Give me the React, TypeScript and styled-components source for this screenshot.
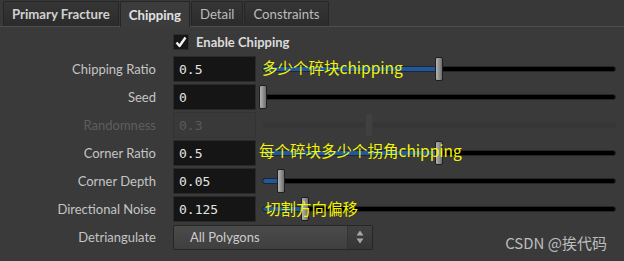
import { Fragment } from 'react';
import styled, { createGlobalStyle } from 'styled-components';

const GlobalStyle = createGlobalStyle`
  html, body {
    margin: 0;
    padding: 0;
    background: #3a3a3a;
  }
  body {
    font-family: Lato, "Noto Sans", sans-serif;
  }
`;

const Panel = styled.div`
  position: relative;
  width: 624px;
  height: 261px;
  background: #3a3a3a;
  overflow: hidden;
`;

const TabBar = styled.div`
  display: flex;
  align-items: flex-end;
  height: 26px;
  padding-left: 3px;
  border-bottom: 1px solid #4e4e4e;
  background: #383838;
`;

const Tab = styled.div<{ $active?: boolean; $bold?: boolean }>`
  margin-right: 1px;
  padding: 0 8px;
  display: flex;
  align-items: center;
  box-sizing: border-box;
  font-size: 13.2px;
  font-weight: ${(p) => (p.$bold ? 700 : 400)};
  color: ${(p) => (p.$active ? '#e2e2e2' : p.$bold ? '#d0d0d0' : '#bdbdbd')};
  background: ${(p) =>
    p.$active ? '#3c3c3c' : 'linear-gradient(#363636, #2b2b2b)'};
  border: 1px solid #262626;
  border-bottom: none;
  border-radius: 2px 2px 0 0;
  margin-bottom: ${(p) => (p.$active ? '-1px' : '0')};
  height: ${(p) => (p.$active ? '26px' : '25px')};
`;

const Form = styled.div`
  display: grid;
  grid-template-columns: 173px 83px 1fr;
  padding: 0 8px 0 0;
`;

const Label = styled.div<{ $disabled?: boolean }>`
  height: 28px;
  padding-right: 17px;
  display: flex;
  align-items: center;
  justify-content: flex-end;
  font-size: 13px;
  white-space: nowrap;
  color: ${(p) => (p.$disabled ? '#5e5e5e' : '#c4c4c4')};
`;

const Check = styled.div`
  grid-column: 2 / 4;
  height: 28px;
  padding-top: 2px;
  box-sizing: border-box;
  display: flex;
  align-items: center;
  gap: 7px;
  font-size: 13px;
  font-weight: 700;
  color: #dcdcdc;
`;

const CheckBox = styled.div`
  width: 16px;
  height: 16px;
  box-sizing: border-box;
  background: #161616;
  border: 1px solid #2c2c2c;
  display: flex;
  align-items: center;
  justify-content: center;
`;

const Cell = styled.div`
  height: 28px;
  display: flex;
  align-items: center;
`;

const Field = styled.div<{ $disabled?: boolean }>`
  width: 83px;
  height: 26px;
  box-sizing: border-box;
  padding-left: 5px;
  display: flex;
  align-items: center;
  font-family: "DejaVu Sans Mono", monospace;
  font-size: 13px;
  color: ${(p) => (p.$disabled ? '#595959' : '#e4e4e4')};
  background: ${(p) => (p.$disabled ? '#393939' : '#151515')};
  border: 1px solid ${(p) => (p.$disabled ? '#333' : '#2a2a2a')};
`;

const SliderCell = styled.div`
  position: relative;
  height: 28px;
  margin-left: 6px;
  display: flex;
  align-items: center;
`;

const Track = styled.div<{ $disabled?: boolean }>`
  position: relative;
  width: 100%;
  height: 6px;
  box-sizing: border-box;
  border-radius: 3px;
  background: ${(p) => (p.$disabled ? '#363636' : '#000')};
  border: 1px solid ${(p) => (p.$disabled ? '#383838' : '#262626')};
`;

const Fill = styled.div`
  position: absolute;
  left: 0;
  top: 0;
  bottom: 0;
  background: #1d58a0;
  border-radius: 2px 0 0 2px;
`;

const Handle = styled.div<{ $disabled?: boolean }>`
  position: absolute;
  top: 50%;
  width: 8px;
  height: 24px;
  box-sizing: border-box;
  transform: translate(-50%, -50%);
  border-radius: 2px;
  border: 1px solid ${(p) => (p.$disabled ? '#3a3a3a' : '#1e1e1e')};
  background: ${(p) =>
    p.$disabled ? '#404040' : 'linear-gradient(90deg, #b4b4b4, #8a8a8a 60%, #6e6e6e)'};
`;

const Note = styled.div<{ $top: number; $left: number }>`
  position: absolute;
  top: ${(p) => p.$top}px;
  left: ${(p) => p.$left}px;
  font-family: "Noto Sans CJK SC", sans-serif;
  font-size: 15.5px;
  line-height: 18px;
  color: #f4f400;
  white-space: nowrap;
  pointer-events: none;
`;

const Select = styled.div`
  grid-column: 2 / 4;
  height: 28px;
  display: flex;
  align-items: center;
`;

const SelectBox = styled.div`
  width: 200px;
  height: 25px;
  box-sizing: border-box;
  display: flex;
  border: 1px solid #262626;
  border-radius: 2px;
  background: linear-gradient(#4b4b4b, #3f3f3f);
  font-size: 13px;
  color: #cccccc;
`;

const SelectText = styled.div`
  flex: 1;
  display: flex;
  align-items: center;
  padding-left: 16px;
`;

const SelectArrows = styled.div`
  width: 24px;
  display: flex;
  align-items: center;
  justify-content: center;
  background: linear-gradient(#404040, #363636);
  border-left: 1px solid #333;
`;

const Watermark = styled.div`
  position: absolute;
  right: 17px;
  bottom: 8px;
  font-family: "Noto Sans CJK SC", sans-serif;
  font-size: 15px;
  color: #bdbdbd;
`;

type SliderRow = {
  label: string;
  value: string;
  pos: number;
  fill?: boolean;
  disabled?: boolean;
  note?: { text: string; top: number; left: number };
};

const rows: SliderRow[] = [
  { label: 'Chipping Ratio', value: '0.5', pos: 0.5, fill: true, note: { text: '多少个碎块chipping', top: 3, left: 0 } },
  { label: 'Seed', value: '0', pos: 0 },
  { label: 'Randomness', value: '0.3', pos: 0.3, disabled: true },
  { label: 'Corner Ratio', value: '0.5', pos: 0.5, fill: true, note: { text: '每个碎块多少个拐角chipping', top: 2, left: -3 } },
  { label: 'Corner Depth', value: '0.05', pos: 0.05, fill: true },
  { label: 'Directional Noise', value: '0.125', pos: 0.12, fill: true, note: { text: '切割方向偏移', top: 4, left: 3 } },
];

function Slider(props: { row: SliderRow }) {
  const { row } = props;
  const pct = `${row.pos * 100}%`;
  return (
    <SliderCell>
      <Track $disabled={row.disabled}>
        {row.fill && !row.disabled && <Fill style={{ width: pct }} />}
        <Handle $disabled={row.disabled} style={{ left: pct }} />
      </Track>
      {row.note && (
        <Note $top={row.note.top} $left={row.note.left}>
          {row.note.text}
        </Note>
      )}
    </SliderCell>
  );
}

export default function App() {
  return (
    <Panel>
      <GlobalStyle />
      <TabBar>
        <Tab $bold>Primary Fracture</Tab>
        <Tab $bold $active>Chipping</Tab>
        <Tab>Detail</Tab>
        <Tab>Constraints</Tab>
      </TabBar>
      <Form>
        <Cell />
        <Check>
          <CheckBox>
            <svg width="12" height="12" viewBox="0 0 12 12">
              <path d="M1.5 6.5 L4.5 10 L10.5 1.5" fill="none" stroke="#f2f2f2" strokeWidth="2.4" strokeLinejoin="round" />
            </svg>
          </CheckBox>
          Enable Chipping
        </Check>
        {rows.map((row) => (
          <Fragment key={row.label}>
            <Label $disabled={row.disabled}>{row.label}</Label>
            <Cell>
              <Field $disabled={row.disabled}>{row.value}</Field>
            </Cell>
            <Slider row={row} />
          </Fragment>
        ))}
        <Label>Detriangulate</Label>
        <Select>
          <SelectBox>
            <SelectText>All Polygons</SelectText>
            <SelectArrows>
              <svg width="8" height="14" viewBox="0 0 8 14">
                <path d="M4 0.5 L7.5 5.5 H0.5 Z" fill="#a8a8a8" />
                <path d="M4 13.5 L7.5 8.5 H0.5 Z" fill="#a8a8a8" />
              </svg>
            </SelectArrows>
          </SelectBox>
        </Select>
      </Form>
      <Watermark>CSDN @挨代码</Watermark>
    </Panel>
  );
}
